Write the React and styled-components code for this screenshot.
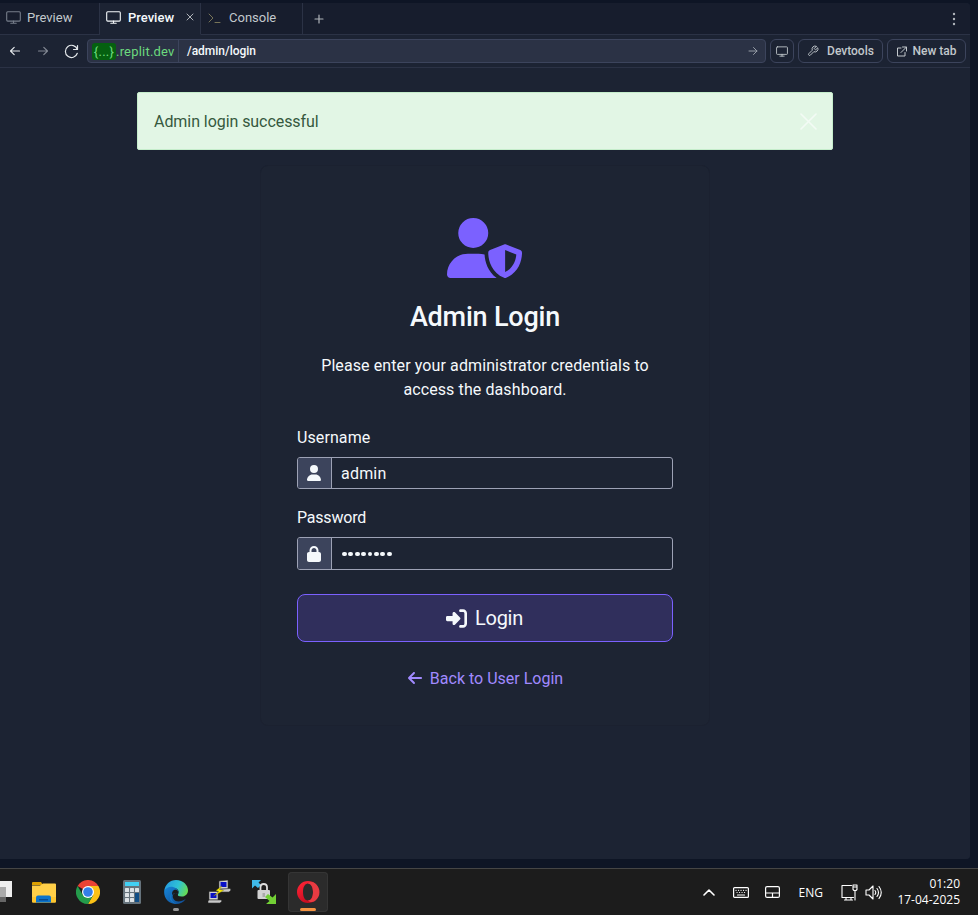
import React from "react";
import styled, { createGlobalStyle, css } from "styled-components";
import { FaUserShield, FaUser, FaLock, FaRightToBracket, FaArrowLeft } from "react-icons/fa6";

const GlobalStyle = createGlobalStyle`
  * { box-sizing: border-box; }
  body { margin: 0; background: #0e1525; overflow: hidden; }
  button, input { font: inherit; color: inherit; margin: 0; letter-spacing: inherit; }
  svg { display: block; flex: none; }
`;

const Screen = styled.div`
  width: 978px;
  height: 915px;
  display: flex;
  flex-direction: column;
  background: #0e1525;
  color: #f5f9fc;
  font-family: Roboto, "Noto Sans", sans-serif;
`;

const Pane = styled.section`
  display: flex;
  flex-direction: column;
  width: 970px;
  height: 856px;
  margin-top: 3px;
  background: #1c2333;
  border-radius: 0 4px 4px 0;
  overflow: hidden;
`;

const TabBar = styled.nav`
  display: flex;
  height: 32px;
  background: #171d2d;
  flex: none;
`;

const Tab = styled.div`
  display: flex;
  align-items: center;
  width: ${(p) => p.$width}px;
  padding: 0 6px 3px;
  gap: ${(p) => p.$gap || 7}px;
  border-right: 1px solid #2b3245;
  border-bottom: 1px solid ${(p) => (p.$active ? "#1c2333" : "#2b3245")};
  background: ${(p) => (p.$active ? "#1c2333" : "transparent")};
  color: ${(p) => (p.$active ? "#f5f9fc" : "#c2c8cc")};
  font-size: 13px;
  font-weight: ${(p) => (p.$active ? 500 : 400)};
  letter-spacing: ${(p) => p.$track || 0}px;
`;

const TabClose = styled.span`
  display: flex;
  margin-left: auto;
`;

const TabActions = styled.div`
  flex: 1;
  display: flex;
  align-items: center;
  justify-content: space-between;
  border-bottom: 1px solid #2b3245;
  padding: 0 11px 0 11px;
  color: #b0b5ba;
`;

const AddressRow = styled.div`
  display: flex;
  align-items: center;
  height: 33px;
  border-bottom: 1px solid #2b3245;
  padding: 0 4px 0 8px;
  flex: none;
`;

const NavIcons = styled.div`
  display: flex;
  align-items: center;
  width: 79px;
  gap: 14px;
`;

const AddressField = styled.div`
  display: flex;
  align-items: center;
  width: 679px;
  height: 24px;
  border: 1px solid #3c445c;
  border-radius: 4px;
  background: #2b3245;
  font-size: 12px;
`;

const Host = styled.span`
  display: flex;
  align-items: center;
  width: 91px;
  height: 22px;
  border-right: 1px solid #3c445c;
  padding-left: 4px;
  color: #6cd97e;
  font-size: 13px;
  letter-spacing: 0.2px;
  white-space: nowrap;
`;

const HostBadge = styled.span`
  width: 24px;
  height: 17px;
  line-height: 17px;
  border-radius: 3px;
  background: #056010;
  text-align: center;
  letter-spacing: 0.3px;
`;

const Path = styled.span`
  flex: 1;
  padding-left: 8px;
  font-weight: 500;
  letter-spacing: -0.02px;
`;

const FieldEnd = styled.span`
  padding-right: 7px;
`;

const ToolButton = styled.button`
  display: flex;
  align-items: center;
  justify-content: center;
  width: ${(p) => p.$width}px;
  height: 24px;
  gap: ${(p) => p.$gap || 0}px;
  margin-left: ${(p) => p.$before}px;
  padding: 0;
  border: 1px solid #3c445c;
  border-radius: 6px;
  background: transparent;
  color: #c2c8cc;
  font-size: 12px;
  font-weight: 500;
  white-space: nowrap;
`;

const Content = styled.main`
  flex: 1;
  display: flex;
  flex-direction: column;
  align-items: center;
  background: #1c2333;
  padding-top: 24px;
`;

const Alert = styled.div`
  display: flex;
  align-items: center;
  justify-content: space-between;
  width: 696px;
  height: 58px;
  padding: 0 15px 0 16px;
  border: 1px solid #c5edcb;
  border-radius: 2px;
  background: #e2f6e5;
  color: #36593e;
  font-size: 16px;
  letter-spacing: -0.06px;
`;

const Card = styled.form`
  display: flex;
  flex-direction: column;
  width: 450px;
  height: 561px;
  margin-top: 15px;
  padding: 51px 36px 0;
  border: 1px solid #1b2130;
  border-radius: 8px;
  background: #1d2433;
`;

const CardIcon = styled.div`
  display: flex;
  justify-content: center;
  height: 60px;
  margin: 1px 2px 0 0;
  color: #7b61ff;

  svg {
    width: 75px;
  }
`;

const Title = styled.h1`
  margin: 20px 0 0;
  height: 38px;
  line-height: 38px;
  font-size: 27px;
  font-weight: 500;
  text-align: center;
  letter-spacing: -0.2px;
`;

const Intro = styled.p`
  margin: 18px 0 0;
  line-height: 24px;
  font-size: 16px;
  text-align: center;
  letter-spacing: 0.1px;
`;

const Label = styled.label`
  display: block;
  height: 24px;
  margin-top: ${(p) => p.$before}px;
  line-height: 24px;
  font-size: 16px;
  letter-spacing: ${(p) => p.$track}px;
`;

const InputGroup = styled.div`
  display: flex;
  height: ${(p) => p.$height}px;
  margin-top: 7px;
  border: 1px solid #9da2b5;
  border-radius: 3px;
  overflow: hidden;
`;

const InputAddon = styled.span`
  display: flex;
  align-items: center;
  justify-content: center;
  width: 34px;
  padding-right: 1px;
  border-right: 1px solid #9da2b5;
  background: #3c445c;
`;

const TextInput = styled.input`
  flex: 1;
  min-width: 0;
  border: 0;
  outline: 0;
  padding: 0 9px;
  background: transparent;
  font-size: 16px;
  letter-spacing: 0.2px;
`;

const Dots = styled.span`
  display: flex;
  align-items: center;
  gap: 1.5px;
  padding: 1px 0 0 10px;
`;

const Dot = styled.i`
  width: 4.9px;
  height: 4.9px;
  border-radius: 50%;
  background: #f5f9fc;
`;

const Submit = styled.button`
  display: flex;
  align-items: center;
  justify-content: center;
  gap: 8px;
  height: 48px;
  margin-top: 24px;
  padding: 0 7px 0 6px;
  border: 1px solid #7b61ff;
  border-radius: 8px;
  background: #302f5c;
  font-size: 20px;
  letter-spacing: -0.3px;
`;

const BackLink = styled.a`
  display: flex;
  align-items: center;
  justify-content: center;
  gap: 7px;
  height: 24px;
  margin-top: 24px;
  color: #a18aff;
  font-size: 16px;
  letter-spacing: 0px;
`;

const Taskbar = styled.footer`
  display: flex;
  justify-content: space-between;
  width: 978px;
  height: 47px;
  margin-top: 9px;
  border-top: 1px solid #454545;
  background: #1c1c1c;
  overflow: hidden;
  font-family: "Open Sans", "Noto Sans", sans-serif;
`;

const Apps = styled.div`
  display: flex;
  align-items: flex-start;
  padding-top: 3px;
  margin-left: -20px;
  gap: 4px;
`;

const AppSlot = styled.span`
  display: flex;
  flex-direction: column;
  align-items: center;
  width: 40px;
  height: 40px;
  padding-top: 8px;
  border-radius: 4px;
  ${(p) =>
    p.$active &&
    css`
      background: #2b2b2b;
      box-shadow: inset 0 0 0 1px #353535;
    `}
`;

const RunningMark = styled.i`
  width: ${(p) => (p.$active ? 16 : 6)}px;
  height: 3px;
  margin-top: 4px;
  border-radius: 2px;
  background: ${(p) => (p.$active ? "#f59443" : "#999")};
`;

const Tray = styled.div`
  display: flex;
  align-items: center;
  padding-right: 18px;
`;

const TrayItem = styled.span`
  display: flex;
  margin-right: ${(p) => p.$after}px;
  font-size: 12px;
  color: #fff;
`;

const Clock = styled.div`
  width: 63px;
  text-align: right;
  font-size: 12px;
  line-height: 16px;
  color: #fff;
  white-space: nowrap;
`;

const Line = ({ w, h = w, box, sw = 1, color = "currentColor", children }) => (
  <svg width={w} height={h} viewBox={box || `0 0 ${w} ${h}`} fill="none" stroke={color} strokeWidth={sw} strokeLinecap="round" strokeLinejoin="round">
    {children}
  </svg>
);

const MonitorIcon = ({ w = 15, h = 13, color }) => (
  <Line w={w} h={h} box="0 0 15 13" color={color} sw="1.1">
    <rect x=".7" y=".7" width="13.6" height="9.4" rx="1" />
    <path d="M7.5 10v2.3M4.8 12.3h5.4" />
  </Line>
);

const FolderIcon = () => (
  <svg width="24" height="24" viewBox="0 0 24 24">
    <path d="M0 3q0-1 1-1h8l2 3h-11z" fill="#dda000" />
    <path d="M0 5.5h8l3-2h12q1 0 1 1v17q0 1-1 1H1q-1 0-1-1z" fill="#ffcf48" />
    <path d="M0 17h24v4.500q0 1-1 1H1q-1 0-1-1z" fill="#fdc52e" />
    <path d="M4 22.500v-5q0-2 2-2h11q2 0 2 2v5z" fill="#0b73cb" />
    <path d="M7 19h9v1.500H7z" fill="#064b91" />
  </svg>
);

const ChromeIcon = () => (
  <svg width="24" height="24" viewBox="0 0 24 24">
    <path d="M12 12 1.600 6A12 12 0 0 1 22.400 6z" fill="#ea4335" />
    <path d="M12 6h10.400A12 12 0 0 1 12 24l5.200-9z" fill="#fbc116" />
    <path d="M1.600 6A12 12 0 0 0 12 24l5.200-9H6.800z" fill="#249b4b" />
    <circle cx="12" cy="12" r="6" fill="#fff" />
    <circle cx="12" cy="12" r="4.800" fill="#347fe9" />
  </svg>
);

const CalculatorIcon = () => (
  <svg width="24" height="24" viewBox="0 0 24 24">
    <rect x="3" width="18" height="24" rx="1.500" fill="#66737c" />
    <rect x="5" y="2" width="14" height="4" fill="#42d0f4" />
    {[8, 13, 18].map((y) => [5, 10, 15].map((x) => (
      <rect key={`${x}-${y}`} x={x} y={y} width="4" height="4" rx=".5" fill={x === 15 && y > 8 ? "#104e86" : "#dce2e6"} />
    )))}
    <path d="M15 13h4v9h-4z" fill="#104e86" />
  </svg>
);

const EdgeIcon = () => (
  <svg width="24" height="24" viewBox="0 0 24 24">
    <defs>
      <linearGradient id="edgeTop" x1="0" x2="1" y1=".3" y2=".6">
        <stop offset="0" stopColor="#259ae0" />
        <stop offset=".55" stopColor="#2fc2d5" />
        <stop offset="1" stopColor="#67dc51" />
      </linearGradient>
      <linearGradient id="edgeLow" x1="0" x2="1" y1="0" y2="1">
        <stop stopColor="#1685d8" />
        <stop offset="1" stopColor="#104a91" />
      </linearGradient>
    </defs>
    <path d="M.2 11C1 4.500 6 0 12 0c7.500 0 12 5.500 12 10.200 0 4-3 6.300-6.300 6.300-3 0-4.300-1-3.700-2.300 2-3-.5-6.200-4-6.200C5.800 8 2 9 .2 11z" fill="url(#edgeTop)" />
    <path d="M.2 11C1.500 8 5.500 6.200 9 7c3.800.8 6.200 4 5 7.200-3-3-6.300.3-5 3.800 1.800 4.500 8 4.500 12.800.8C19.500 22.500 16 24 12 24 4.500 24-.5 18 .2 11z" fill="url(#edgeLow)" />
    <path d="M9.500 12.500c-4 3.500-2.500 9.500 3 11.500C6 23 2.800 15.500 9.500 12.500z" fill="#1677c5" />
    <path d="M14 14.200c1-3.200-1.500-5-3.800-4.200-2 .8-2.600 3.200-1.700 5.600.3-2.400 3-3.600 5.500-1.400z" fill="#1c1c1c" />
  </svg>
);

const PuttyIcon = () => (
  <svg width="24" height="24" viewBox="0 0 24 24">
    <path d="M11 1 20 0v9h-9zM1 11.500h9V20H1z" fill="#d2d2d2" stroke="#333" strokeWidth=".6" />
    <path d="M12.500 2h6v5h-6zM2.500 13h6v5h-6z" fill="#0910c8" />
    <path d="m10 9.500 12-1 1 1.500-2 2H10zM1 20h12l1 1-2 2H0v-2z" fill="#c9c9c9" stroke="#333" strokeWidth=".6" />
    <path d="m14 6-6 4.500 3 1L5.500 16l10-5.500-4-1z" fill="#fff200" stroke="#827900" strokeWidth=".4" />
  </svg>
);

const SecureCopyIcon = () => (
  <svg width="24" height="24" viewBox="0 0 24 24">
    <path d="M0 0h9L6.500 2.500 9 5 6 8 3 5.500 0 8.500z" fill="#3fb9e8" />
    <path d="M8.500 11V7q0-3 3.200-3T15 7v5" fill="none" stroke="#ddd" strokeWidth="1.800" />
    <rect x="5.500" y="10" width="12.500" height="9" rx="1" fill="#d2d2d2" />
    <path d="M10.500 13h2.500v4h-2.500z" fill="#aaa" />
    <path d="m13 17 3-3 4.500 3.500L24 14v10H14l3.500-3z" fill="#72cf35" />
  </svg>
);

const OperaIcon = () => (
  <svg width="24" height="24" viewBox="0 0 24 24">
    <defs>
      <linearGradient id="operaRed" x1=".2" x2=".8" y1="0" y2="1">
        <stop stopColor="#ff2436" />
        <stop offset="1" stopColor="#bd071b" />
      </linearGradient>
    </defs>
    <path fillRule="evenodd" d="M12 1a11 11 0 1 0 0 22 11 11 0 0 0 0-22zm0 2.500c3 0 5 3.500 5 8.500s-2 8.500-5 8.500S7 17 7 12s2-8.500 5-8.500z" fill="url(#operaRed)" />
    <path d="M12 3.500c2-2 4.500-1.600 7-.2A11 11 0 0 1 19 21c-2.500 1.500-5 1.500-7-.5 3 0 5-3.500 5-8.500s-2-8.500-5-8.500z" fill="#e83b42" />
  </svg>
);

const TaskViewIcon = () => (
  <svg width="24" height="24" viewBox="0 0 24 24">
    <path d="M5 1h19v16H5z" fill="#eee" />
    <path d="M0 7h18v15H0z" fill="#aaa" />
    <path d="M0 17h18v5H0z" fill="#666" />
  </svg>
);

export default function App() {
  return (
    <Screen>
      <GlobalStyle />
      <Pane>
        <TabBar>
          <Tab $width={100} $gap={6}><MonitorIcon color="#777e8b" />Preview</Tab>
          <Tab $width={101} $active>
            <MonitorIcon />Preview
            <TabClose><Line w={8} color="#b0b5ba"><path d="m1 1 6 6M7 1 1 7" /></Line></TabClose>
          </Tab>
          <Tab $width={102}>
            <Line w={15} h={13} color="#777458"><path d="m2 3 4 4-4 4M8 11.500h5" /></Line>Console
          </Tab>
          <TabActions>
            <Line w={10} sw="1.2"><path d="M5 1v8M1 5h8" /></Line>
            <svg width="10" height="14" fill="currentColor"><circle cx="5" cy="2" r="1.200" /><circle cx="5" cy="7" r="1.200" /><circle cx="5" cy="12" r="1.200" /></svg>
          </TabActions>
        </TabBar>
        <AddressRow>
          <NavIcons>
            <Line w={14} sw="1.200" color="#e2e6e9"><path d="M11.500 7H2.500M6.200 3.300 2.500 7l3.700 3.700" /></Line>
            <Line w={14} sw="1.200" color="#828893"><path d="M2.500 7h9M7.800 3.300 11.500 7l-3.700 3.700" /></Line>
            <Line w={15} sw="1.200" color="#e2e6e9"><path d="M13.500 1.500v4h-4M13.300 5.500A6.100 6.100 0 1 0 13.300 9.300" /></Line>
          </NavIcons>
          <AddressField>
            <Host><HostBadge>{"{...}"}</HostBadge>.replit.dev</Host>
            <Path>/admin/login</Path>
            <FieldEnd><Line w={10} color="#979da7"><path d="M1 5h8M5.500 1.500 9 5 5.500 8.500" /></Line></FieldEnd>
          </AddressField>
          <ToolButton $width={24} $before={4}><MonitorIcon w={12} h={11} /></ToolButton>
          <ToolButton $width={85} $before={4} $gap={8}>
            <Line w={12} box="0 0 24 24" sw="1.900"><path d="M14.700 6.300a1 1 0 0 0 0 1.400l1.600 1.600a1 1 0 0 0 1.400 0l3.800-3.800a6 6 0 0 1-7.900 7.900l-6.900 6.900a2.100 2.100 0 0 1-3-3l6.900-6.900a6 6 0 0 1 7.900-7.900z" /></Line>Devtools
          </ToolButton>
          <ToolButton $width={79} $before={4} $gap={5}>
            <Line w={11}><path d="M5 2H1.500v8H9V6.500M6.500 1h4v4M10.500 1 5 6.500" /></Line>New tab
          </ToolButton>
        </AddressRow>
        <Content>
          <Alert>
            Admin login successful
            <Line w={17} color="#f3fbf5" sw="1.600"><path d="m1 1 15 15M16 1 1 16" /></Line>
          </Alert>
          <Card>
            <CardIcon><FaUserShield size={60} /></CardIcon>
            <Title>Admin Login</Title>
            <Intro>Please enter your administrator credentials to<br />access the dashboard.</Intro>
            <Label $before={24} $track={0.1}>Username</Label>
            <InputGroup $height={32}>
              <InputAddon><FaUser size={16} /></InputAddon>
              <TextInput defaultValue="admin" />
            </InputGroup>
            <Label $before={17} $track={-0.2}>Password</Label>
            <InputGroup $height={33}>
              <InputAddon><FaLock size={16} /></InputAddon>
              <Dots>{Array.from({ length: 8 }, (_, i) => <Dot key={i} />)}</Dots>
            </InputGroup>
            <Submit type="button"><FaRightToBracket size={21} />Login</Submit>
            <BackLink><FaArrowLeft size={16} />Back to User Login</BackLink>
          </Card>
        </Content>
      </Pane>
      <Taskbar>
        <Apps>
          <AppSlot><TaskViewIcon /></AppSlot>
          <AppSlot><FolderIcon /></AppSlot>
          <AppSlot><ChromeIcon /></AppSlot>
          <AppSlot><CalculatorIcon /></AppSlot>
          <AppSlot><EdgeIcon /><RunningMark /></AppSlot>
          <AppSlot><PuttyIcon /></AppSlot>
          <AppSlot><SecureCopyIcon /></AppSlot>
          <AppSlot $active><OperaIcon /><RunningMark $active /></AppSlot>
        </Apps>
        <Tray>
          <TrayItem $after={18}><Line w={12} h={8} sw="1.600"><path d="m1 7 5-5 5 5" /></Line></TrayItem>
          <TrayItem $after={16}>
            <Line w={16} h={11} sw="1.200"><rect x=".6" y=".6" width="14.800" height="9.800" rx="1" /><path d="M3 3.300h.1M5.500 3.300h.1M8 3.300h.1M10.500 3.300h.1M13 3.300h.1M4 5.500h.1M6.500 5.500h.1M9 5.500h.1M11.500 5.500h.1M4.500 8h7" /></Line>
          </TrayItem>
          <TrayItem $after={19}>
            <Line w={15} h={12} sw="1.200"><rect x=".6" y=".6" width="13.800" height="10.800" rx="1.500" /><path d="M.6 7h13.800M7.500 7v4.400" /></Line>
          </TrayItem>
          <TrayItem $after={18}>ENG</TrayItem>
          <TrayItem $after={7}>
            <Line w={17} h={17} sw="1.100"><path d="M10.500 1.500H1v12h11.500M3.500 16h8M5 13.500V16M10 13.500V16M12 1h4v4.500l-1 1h-2l-1-1zM12 3h4M14 6.500V16" /></Line>
          </TrayItem>
          <TrayItem $after={15}>
            <Line w={17} h={15} sw="1.100"><path d="M1 5h3l4-4v13l-4-4H1zM10 5.500q1.500 2 0 4M12 3.500q3 4 0 8M14 1.500q4.500 6 0 12" /></Line>
          </TrayItem>
          <Clock>01:20<br />17-04-2025</Clock>
        </Tray>
      </Taskbar>
    </Screen>
  );
}
